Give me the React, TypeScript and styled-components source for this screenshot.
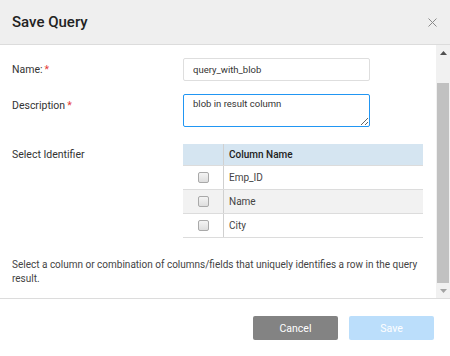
import React, { useEffect, useRef } from "react";
import styled, { createGlobalStyle } from "styled-components";

const Global = createGlobalStyle`
  html, body { margin: 0; padding: 0; background: #fff; }
  body { font-family: Roboto, "Liberation Sans", Arial, sans-serif; color: #333; }
  * { box-sizing: border-box; }
`;

const Dialog = styled.div`
  width: 450px;
  height: 356px;
  display: flex;
  flex-direction: column;
  background: #fff;
`;

const Header = styled.div`
  height: 45px;
  flex: none;
  background: #efefef;
  border-bottom: 1px solid #dcdcdc;
  display: flex;
  align-items: center;
  justify-content: space-between;
  padding: 0 12px 0 12px;
`;

const Title = styled.h1`
  margin: 0;
  font-size: 15px;
  font-weight: 500;
  color: #222;
`;

const CloseBtn = styled.button`
  border: none;
  background: none;
  padding: 0;
  width: 12px;
  height: 12px;
  display: flex;
  align-items: center;
  justify-content: center;
  cursor: pointer;
`;

const Body = styled.div`
  flex: 1;
  display: flex;
  min-height: 0;
`;

const Content = styled.div`
  flex: 1;
  overflow: hidden;
  padding: 13px 0 0 12px;
  display: flex;
  flex-direction: column;
`;

const ScrollTrack = styled.div`
  width: 14px;
  flex: none;
  background: #f1f1f1;
  display: flex;
  flex-direction: column;
`;

const ScrollArrow = styled.div`
  height: 15px;
  flex: none;
  display: flex;
  align-items: center;
  justify-content: center;
`;

const ThumbArea = styled.div`
  flex: 1;
  display: flex;
  flex-direction: column;
  justify-content: flex-end;
  padding: 0 1px;
`;

const Thumb = styled.div`
  height: 200px;
  background: #c1c1c1;
`;

const FormRow = styled.div<{ $gap?: number }>`
  display: flex;
  align-items: flex-start;
  margin-bottom: ${(p) => p.$gap ?? 0}px;
`;

const Label = styled.div<{ $h: number }>`
  width: 171px;
  flex: none;
  font-size: 10.5px;
  line-height: ${(p) => p.$h}px;
  color: #333;
`;

const Req = styled.span`
  color: #e53935;
  margin-left: 2px;
`;

const TextInput = styled.input`
  width: 187px;
  height: 23px;
  border: 1px solid #dedede;
  border-radius: 2px;
  padding: 0 9px;
  font-family: inherit;
  font-size: 9.5px;
  color: #333;
  outline: none;
`;

const TextArea = styled.textarea`
  width: 187px;
  height: 33px;
  border: 1px solid #2196f3;
  border-radius: 2px;
  padding: 3px 9px 2px;
  font-family: inherit;
  font-size: 9.5px;
  color: #333;
  outline: none;
  resize: both;
  display: block;
  &:focus {
    border-color: #2196f3;
    outline: none;
  }
`;

const Table = styled.div`
  width: 240px;
  display: flex;
  flex-direction: column;
  border-bottom: 1px solid #dcdcdc;
`;

const TRow = styled.div<{ $head?: boolean; $alt?: boolean }>`
  display: grid;
  grid-template-columns: 41px 1fr;
  height: ${(p) => (p.$head ? 21 : 24)}px;
  background: ${(p) => (p.$head ? "#d5e5f1" : p.$alt ? "#f2f2f2" : "#fff")};
  border-top: ${(p) => (p.$head ? "none" : "1px solid #dcdcdc")};
`;

const CheckCell = styled.div`
  display: flex;
  align-items: center;
  justify-content: center;
  border-right: 1px solid #d0d0d0;
`;

const NameCell = styled.div<{ $head?: boolean }>`
  display: flex;
  align-items: center;
  padding-left: 5px;
  font-size: 10px;
  font-weight: ${(p) => (p.$head ? 500 : 400)};
  color: ${(p) => (p.$head ? "#222" : "#444")};
`;

const Check = styled.span`
  width: 11px;
  height: 11px;
  border: 1px solid #a9a9a9;
  border-radius: 2px;
  background: linear-gradient(#f4f4f4, #dedede);
`;

const Help = styled.p`
  margin: 20px 0 0;
  font-size: 10px;
  line-height: 14px;
  color: #444;
`;

const Footer = styled.div`
  height: 58px;
  flex: none;
  border-top: 1px solid #dcdcdc;
  display: flex;
  justify-content: flex-end;
  align-items: flex-start;
  gap: 11px;
  padding: 17px 16px 0 0;
`;

const Btn = styled.button<{ $variant: "cancel" | "save" }>`
  width: 85px;
  height: 24px;
  border: none;
  border-radius: 2px;
  font-family: inherit;
  font-size: 10.5px;
  color: #fff;
  background: ${(p) => (p.$variant === "cancel" ? "#838383" : "#bbdefb")};
  cursor: pointer;
`;

const columns = ["Emp_ID", "Name", "City"];

export default function App() {
  const taRef = useRef<HTMLTextAreaElement>(null);

  useEffect(() => {
    const ta = taRef.current;
    if (ta) {
      ta.focus({ preventScroll: true });
      ta.setSelectionRange(ta.value.length, ta.value.length);
    }
  }, []);

  return (
    <>
      <Global />
      <Dialog>
        <Header>
          <Title>Save Query</Title>
          <CloseBtn aria-label="Close">
            <svg width="9" height="9" viewBox="0 0 9 9">
              <path d="M0.5 0.5L8.5 8.5M8.5 0.5L0.5 8.5" stroke="#8a8a8a" strokeWidth="1" />
            </svg>
          </CloseBtn>
        </Header>
        <Body>
          <Content>
            <FormRow $gap={13}>
              <Label $h={23}>
                Name:<Req>*</Req>
              </Label>
              <TextInput defaultValue="query_with_blob" />
            </FormRow>
            <FormRow $gap={17}>
              <Label $h={23}>
                Description<Req>*</Req>
              </Label>
              <TextArea ref={taRef} defaultValue="blob in result column" />
            </FormRow>
            <FormRow>
              <Label $h={21}>Select Identifier</Label>
              <Table>
                <TRow $head>
                  <CheckCell />
                  <NameCell $head>Column Name</NameCell>
                </TRow>
                {columns.map((c, i) => (
                  <TRow key={c} $alt={i % 2 === 1}>
                    <CheckCell>
                      <Check />
                    </CheckCell>
                    <NameCell>{c}</NameCell>
                  </TRow>
                ))}
              </Table>
            </FormRow>
            <Help>
              Select a column or combination of columns/fields that uniquely identifies a row in the query result.
            </Help>
          </Content>
          <ScrollTrack aria-hidden>
            <ScrollArrow>
              <svg width="7" height="4" viewBox="0 0 7 4">
                <path d="M0 4L3.5 0L7 4Z" fill="#505050" />
              </svg>
            </ScrollArrow>
            <ThumbArea>
              <Thumb />
            </ThumbArea>
            <ScrollArrow>
              <svg width="7" height="4" viewBox="0 0 7 4">
                <path d="M0 0L7 0L3.5 4Z" fill="#a3a3a3" />
              </svg>
            </ScrollArrow>
          </ScrollTrack>
        </Body>
        <Footer>
          <Btn $variant="cancel">Cancel</Btn>
          <Btn $variant="save">Save</Btn>
        </Footer>
      </Dialog>
    </>
  );
}
